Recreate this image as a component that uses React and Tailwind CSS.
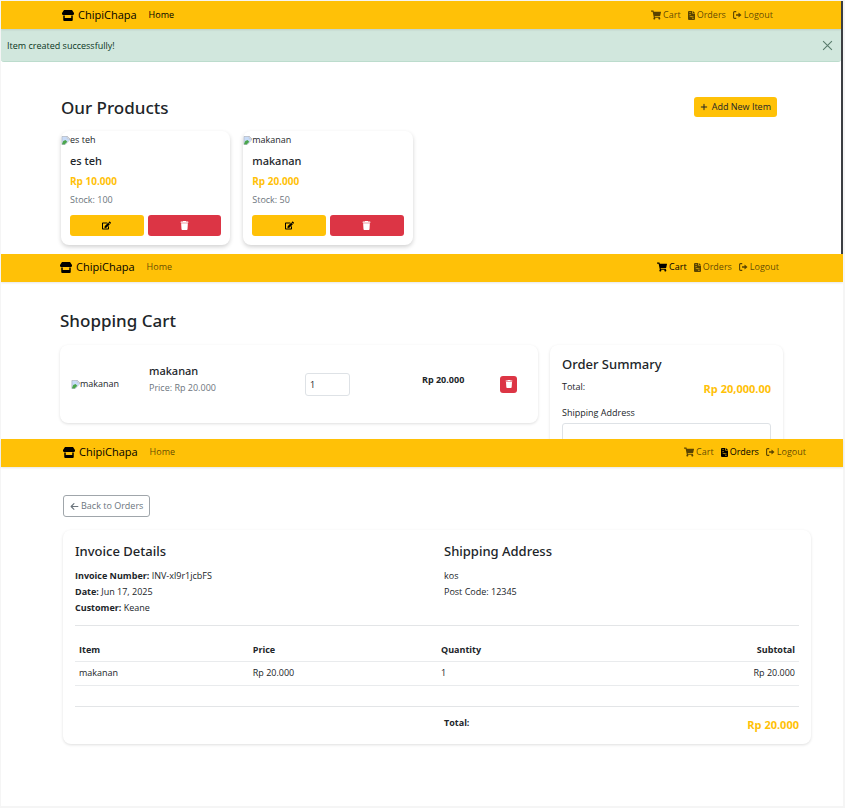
import { FaArrowLeft, FaPlus, FaTrash } from 'react-icons/fa6';
import { FaEdit, FaShoppingCart, FaSignOutAlt } from 'react-icons/fa';

function StoreIcon() {
  return (
    <svg viewBox="0 0 24 22" className="h-[11px] w-3" fill="currentColor" aria-hidden="true">
      <path d="M4 0h16l4 6c.6 2-.8 4-3 4H3C.8 10-.6 8 0 6z" />
      <path d="M2.500 11h3v5h13v-5h3v9a2 2 0 0 1-2 2h-15a2 2 0 0 1-2-2z" />
    </svg>
  );
}

function OrdersIcon() {
  return (
    <svg viewBox="0 0 14 18" className="h-[9px] w-[7px]" fill="currentColor" aria-hidden="true">
      <path fillRule="evenodd" d="M2 0h6.500v5H14v11a2 2 0 0 1-2 2H2a2 2 0 0 1-2-2V2a2 2 0 0 1 2-2zM2.500 3v1H6V3zM2.500 5.800v1H6v-1zM3 9.500v1.200l5 1.600h3v-1.200H8.200zM8 14v1.200h3.500V14z" />
      <path d="M9.700 0 14 4H9.700z" />
    </svg>
  );
}

function Nav({ active, className }) {
  const tone = (name) => (active === name ? 'text-black' : 'text-black/65');
  return (
    <nav className={`relative flex h-7 shrink-0 items-center bg-[#ffc107] shadow-[0_1px_2px_rgba(0,0,0,0.1)] ${className}`}>
      <a href="#home" className="flex items-center gap-1 text-[11px] text-black">
        <StoreIcon />
        ChipiChapa
      </a>
      <a href="#home" className={`ml-3 ${tone('home')}`}>Home</a>
      <div className="ml-auto flex items-center gap-[7px]">
        <a href="#cart" className={`flex items-center gap-0.5 ${tone('cart')}`}>
          <FaShoppingCart className="size-2.5" />
          Cart
        </a>
        <a href="#orders" className={`flex items-center gap-0.5 ${tone('orders')}`}>
          <OrdersIcon />
          Orders
        </a>
        <a href="#logout" className={`flex items-center gap-0.5 ${tone('logout')}`}>
          <svg viewBox="0 0 18 16" className="h-2 w-[9px]" fill="none" stroke="currentColor" strokeWidth="2.200" aria-hidden="true">
            <path d="M6.500 1.200H3a1.800 1.800 0 0 0-1.800 1.800v10A1.800 1.800 0 0 0 3 14.800h3.500" />
            <path d="M6 6.300h5V3l6 5-6 5V9.700H6z" fill="currentColor" stroke="none" />
          </svg>
          Logout
        </a>
      </div>
    </nav>
  );
}

function MissingImage({ label }) {
  return (
    <div role="img" aria-label={label} className="flex items-center text-[9px] leading-4">
      <svg viewBox="0 0 10 10" className="size-[9px] shrink-0">
        <path d="M1 .5h6l2.500 2.500v2L5 9.500H1z" fill="#c9dcf8" stroke="#a5aab2" strokeWidth=".7" />
        <path d="M1 9.200 2.500 5.500l2.500-1L7 6.500 4 9.500z" fill="#4ca64c" />
        <path d="M7 .5V3h2.500z" fill="#fff" stroke="#a5aab2" strokeWidth=".5" />
        <path d="M10 4.500v1L5.800 10H4.600z" fill="#fff" />
      </svg>
      <span>{label}</span>
    </div>
  );
}

function Product({ name, price, stock }) {
  return (
    <article className="overflow-hidden rounded-lg bg-white pt-px shadow-[0_2px_4px_rgba(0,0,0,0.18)]">
      <MissingImage label={name} />
      <div className="px-[9px] pt-[5px] pb-[9px]">
        <h3 className="font-['Noto_Sans',sans-serif] text-[11px] leading-4 font-medium">{name}</h3>
        <p className="mt-1 text-[10px] leading-4 font-bold text-[#ffc107]">{price}</p>
        <p className="mt-1 leading-3.5 text-[#6c757d]">Stock: {stock}</p>
        <div className="mt-2 grid grid-cols-2 gap-1">
          <button type="button" aria-label={`Edit ${name}`} className="flex h-[21px] items-center justify-center rounded-[3px] bg-[#ffc107] text-black">
            <FaEdit className="size-[9px]" />
          </button>
          <button type="button" aria-label={`Delete ${name}`} className="flex h-[21px] items-center justify-center rounded-[3px] bg-[#dc3545] text-white">
            <FaTrash className="size-[9px]" />
          </button>
        </div>
      </div>
    </article>
  );
}

function ProductsPage() {
  return (
    <section className="h-[253px] shrink-0 overflow-hidden border-r-2 border-[#3b3e42] bg-white">
      <Nav active="home" className="pr-[68px] pl-[61px]" />
      <div role="alert" className="flex h-[33px] items-center justify-between rounded-b-[3px] border-b border-[#bcdccd] bg-[#d1e7dd] pt-px pr-2 pl-1.5 text-[#0a3622]">
        Item created successfully!
        <button type="button" aria-label="Close" className="text-[#0a3622]/60">
          <svg viewBox="0 0 10 10" className="size-[11px]" fill="none" stroke="currentColor">
            <path d="m1 1 8 8M9 1 1 9" />
          </svg>
        </button>
      </div>
      <main className="pt-[35px] pr-16 pl-[60px]">
        <div className="flex h-5 items-center justify-between">
          <h1 className="pt-0.5 font-['Noto_Sans',sans-serif] text-[17px] font-medium">Our Products</h1>
          <button type="button" className="flex h-5 items-center gap-1 rounded-[3px] bg-[#ffc107] px-1.5 text-[#212529]">
            <FaPlus className="size-2" />
            Add New Item
          </button>
        </div>
        <div className="mt-3.5 grid grid-cols-4 gap-[13px]">
          <Product name="es teh" price="Rp 10.000" stock="100" />
          <Product name="makanan" price="Rp 20.000" stock="50" />
        </div>
      </main>
    </section>
  );
}

function CartPage() {
  return (
    <section className="h-[185px] shrink-0 overflow-hidden bg-white">
      <Nav active="cart" className="pr-16 pb-0.5 pl-[59px]" />
      <main className="pt-[25px] pr-[60px] pl-[59px]">
        <h1 className="font-['Noto_Sans',sans-serif] text-[17px] leading-7 font-medium">Shopping Cart</h1>
        <div className="mt-2.5 grid grid-cols-[478fr_233fr] items-start gap-3">
          <article className="grid h-[78px] grid-cols-[78fr_156fr_117fr_78fr_27fr] items-center rounded-lg bg-white px-[11px] shadow-[0_1px_3px_rgba(0,0,0,0.13)]">
            <MissingImage label="makanan" />
            <div className="pb-2.5">
              <h2 className="font-['Noto_Sans',sans-serif] text-[11px] leading-4 font-medium">makanan</h2>
              <p className="mt-0.5 leading-3.5 text-[#6c757d]">Price: Rp 20.000</p>
            </div>
            <input type="text" aria-label="Quantity" defaultValue="1" className="h-[23px] w-[45px] rounded-[3px] border border-[#dee2e6] px-1 text-[9px]" />
            <p className="pb-2 leading-3.5 font-bold">Rp 20.000</p>
            <button type="button" aria-label="Remove makanan" className="flex size-[17px] items-center justify-center rounded-[3px] bg-[#dc3545] text-white">
              <FaTrash className="size-2" />
            </button>
          </article>
          <aside className="rounded-lg bg-white px-3 py-[11px] shadow-[0_1px_3px_rgba(0,0,0,0.13)]">
            <h2 className="font-['Noto_Sans',sans-serif] text-[13px] leading-4 font-medium">Order Summary</h2>
            <div className="mt-2 flex justify-between">
              <span className="leading-3.5">Total:</span>
              <span className="text-[11px] leading-[18px] font-bold text-[#ffc107]">Rp 20,000.00</span>
            </div>
            <label htmlFor="address" className="mt-2 block leading-3.5">Shipping Address</label>
            <textarea id="address" rows="3" className="mt-[3px] block w-full resize-none rounded-[3px] border border-[#dee2e6]" />
          </aside>
        </div>
      </main>
    </section>
  );
}

function InvoicePage() {
  return (
    <section className="grow bg-white">
      <Nav active="orders" className="pr-[37px] pb-0.5 pl-[62px]" />
      <main className="pt-7 pr-8 pb-[62px] pl-[62px]">
        <button type="button" className="flex h-[22px] items-center gap-0.5 rounded-[3px] border border-[#a0a6ab] px-1.5 text-[#6c757d]">
          <FaArrowLeft className="size-[9px]" />
          Back to Orders
        </button>
        <article className="mt-[13px] rounded-lg bg-white px-3 pt-3 pb-2.5 shadow-[0_1px_3px_rgba(0,0,0,0.13)]">
          <div className="grid grid-cols-[369fr_355fr] leading-4">
            <div>
              <h2 className="mb-2 font-['Noto_Sans',sans-serif] text-[13px] leading-[18px] font-medium">Invoice Details</h2>
              <p><b>Invoice Number:</b> INV-xl9r1jcbFS</p>
              <p><b>Date:</b> Jun 17, 2025</p>
              <p><b>Customer:</b> Keane</p>
            </div>
            <div>
              <h2 className="mb-2 font-['Noto_Sans',sans-serif] text-[13px] leading-[18px] font-medium">Shipping Address</h2>
              <p>kos</p>
              <p>Post Code: 12345</p>
            </div>
          </div>
          <hr className="mt-[9px] mb-3 border-[#e3e5e7]" />
          <table className="w-full table-fixed text-left">
            <colgroup>
              <col className="w-[24%]" />
              <col className="w-[26%]" />
              <col className="w-1/4" />
              <col className="w-1/4" />
            </colgroup>
            <thead>
              <tr className="h-[23px] border-b border-[#e9ebed]">
                <th className="px-1">Item</th>
                <th className="px-1">Price</th>
                <th className="px-1">Quantity</th>
                <th className="px-1 text-right">Subtotal</th>
              </tr>
            </thead>
            <tbody>
              <tr className="h-6 border-b border-[#e9ebed]">
                <td className="px-1">makanan</td>
                <td className="px-1">Rp 20.000</td>
                <td className="px-1">1</td>
                <td className="px-1 text-right">Rp 20.000</td>
              </tr>
            </tbody>
          </table>
          <hr className="mt-5 mb-[9px] border-[#e3e5e7]" />
          <div className="grid grid-cols-[369fr_355fr]">
            <div className="col-start-2 flex justify-between">
              <b className="leading-3.5">Total:</b>
              <span className="text-[11px] leading-[18px] font-bold text-[#ffc107]">Rp 20.000</span>
            </div>
          </div>
        </article>
      </main>
    </section>
  );
}

export default function App() {
  return (
    <div className="flex min-h-screen flex-col bg-[#f5f5f5] pt-px pr-0.5 pb-[3px] pl-px font-['Open_Sans','Noto_Sans',sans-serif] text-[9px] text-[#212529]">
      <ProductsPage />
      <CartPage />
      <InvoicePage />
    </div>
  );
}
